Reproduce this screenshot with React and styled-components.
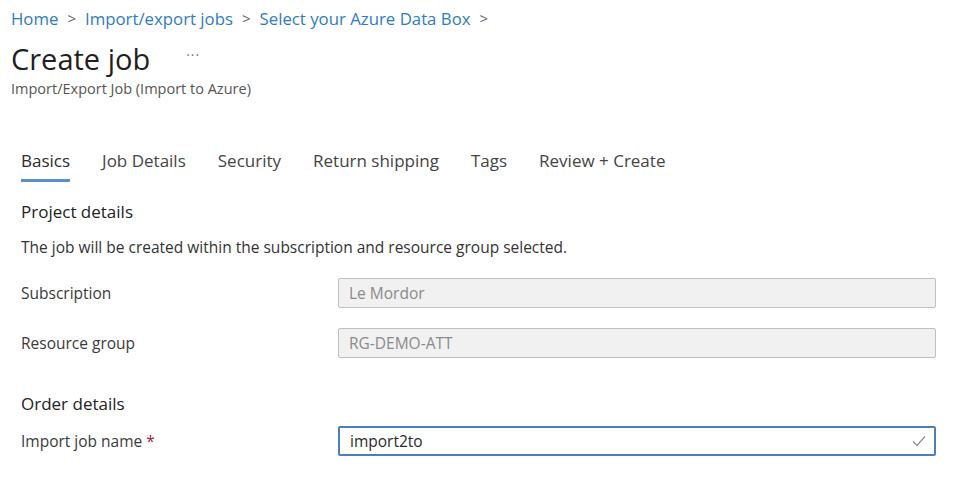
import React from 'react';
import styled, { createGlobalStyle } from 'styled-components';

const GlobalStyle = createGlobalStyle`
  body {
    margin: 0;
    background: #ffffff;
    font-family: 'Open Sans', 'Noto Sans', sans-serif;
    color: #323130;
  }
`;

const Page = styled.div`
  width: 960px;
  height: 479px;
  overflow: hidden;
  box-sizing: border-box;
  padding: 6px 0 0 11px;
`;

const Breadcrumb = styled.nav`
  display: flex;
  align-items: center;
  gap: 9px;
  font-size: 16.8px;
  height: 24px;
`;

const Crumb = styled.a`
  color: #2f7bc1;
  text-decoration: none;
`;

const Chevron = styled.span`
  color: #666;
  font-size: 15px;
`;

const TitleRow = styled.div`
  display: flex;
  align-items: center;
  gap: 36px;
  margin-top: 8px;
  height: 40px;
`;

const Title = styled.h1`
  margin: 0;
  font-size: 29px;
  font-weight: 400;
  color: #1f1f1f;
`;

const More = styled.span`
  color: #777;
  font-size: 14px;
  letter-spacing: 1px;
  margin-top: -8px;
`;

const Subtitle = styled.div`
  font-size: 14.5px;
  color: #555;
  margin-top: 1px;
`;

const Body = styled.div`
  padding-left: 10px;
  margin-top: 51px;
  width: 915px;
`;

const Tabs = styled.div`
  display: flex;
  gap: 32px;
`;

const Tab = styled.div`
  font-size: 17px;
  color: ${(p) => (p.active ? '#2b2b2b' : '#444')};
  padding-bottom: 7px;
  border-bottom: 3px solid ${(p) => (p.active ? '#5a8fca' : 'transparent')};
`;

const SectionTitle = styled.h2`
  margin: ${(p) => p.top}px 0 0;
  font-size: 17px;
  font-weight: 400;
  color: #222;
`;

const Description = styled.p`
  margin: 13px 0 0;
  font-size: 15.5px;
  color: #333;
`;

const Field = styled.div`
  display: grid;
  grid-template-columns: 317px 598px;
  align-items: center;
  margin-top: ${(p) => p.top}px;
`;

const Label = styled.label`
  font-size: 15.5px;
  color: #3a3a3a;
`;

const Required = styled.span`
  color: #a4262c;
  margin-left: 4px;
`;

const InputBox = styled.div`
  position: relative;
  height: 30px;
  box-sizing: border-box;
  display: flex;
  align-items: center;
  padding: 0 10px;
  border: ${(p) => (p.focused ? '2px solid #4a7dc2' : '1px solid #bfbfbf')};
  border-radius: 2px;
  background: ${(p) => (p.disabled ? '#f1f1f1' : '#ffffff')};
  font-size: 15.5px;
  color: ${(p) => (p.disabled ? '#8a8a8a' : '#2a2a2a')};
`;

const Check = styled.svg`
  position: absolute;
  right: 8px;
  top: 50%;
  transform: translateY(-50%);
`;

export default function App() {
  return (
    <>
      <GlobalStyle />
      <Page>
        <Breadcrumb>
          <Crumb>Home</Crumb>
          <Chevron>&gt;</Chevron>
          <Crumb>Import/export jobs</Crumb>
          <Chevron>&gt;</Chevron>
          <Crumb>Select your Azure Data Box</Crumb>
          <Chevron>&gt;</Chevron>
        </Breadcrumb>
        <TitleRow>
          <Title>Create job</Title>
          <More>···</More>
        </TitleRow>
        <Subtitle>Import/Export Job (Import to Azure)</Subtitle>
        <Body>
          <Tabs>
            <Tab active>Basics</Tab>
            <Tab>Job Details</Tab>
            <Tab>Security</Tab>
            <Tab>Return shipping</Tab>
            <Tab>Tags</Tab>
            <Tab>Review + Create</Tab>
          </Tabs>
          <SectionTitle top={18}>Project details</SectionTitle>
          <Description>The job will be created within the subscription and resource group selected.</Description>
          <Field top={20}>
            <Label>Subscription</Label>
            <InputBox disabled>Le Mordor</InputBox>
          </Field>
          <Field top={20}>
            <Label>Resource group</Label>
            <InputBox disabled>RG-DEMO-ATT</InputBox>
          </Field>
          <SectionTitle top={34}>Order details</SectionTitle>
          <Field top={11}>
            <Label>
              Import job name<Required>*</Required>
            </Label>
            <InputBox focused>
              import2to
              <Check width="14" height="12" viewBox="0 0 14 12">
                <path d="M1 6.5 L5 10.5 L13 1.5" fill="none" stroke="#8a8a8a" strokeWidth="1.2" />
              </Check>
            </InputBox>
          </Field>
        </Body>
      </Page>
    </>
  );
}
